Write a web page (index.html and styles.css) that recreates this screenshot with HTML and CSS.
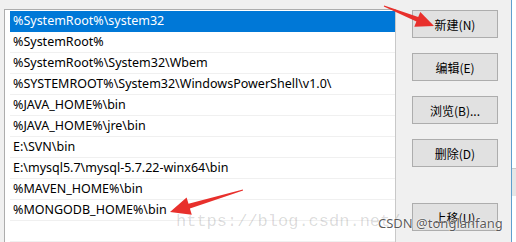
FILE: index.html
```html
<!DOCTYPE html>
<html>
<head>
<meta charset="utf-8">
<link rel="stylesheet" href="styles.css">
</head>
<body>
<div class="screen">
  <div class="dialog">
    <div class="list">
      <div class="row selected">%SystemRoot%\system32</div>
      <div class="row">%SystemRoot%</div>
      <div class="row">%SystemRoot%\System32\Wbem</div>
      <div class="row">%SYSTEMROOT%\System32\WindowsPowerShell\v1.0\</div>
      <div class="row">%JAVA_HOME%\bin</div>
      <div class="row">%JAVA_HOME%\jre\bin</div>
      <div class="row">E:\SVN\bin</div>
      <div class="row">E:\mysql5.7\mysql-5.7.22-winx64\bin</div>
      <div class="row">%MAVEN_HOME%\bin</div>
      <div class="row">%MONGODB_HOME%\bin</div>
      <div class="row"></div>
    </div>
    <div class="buttons">
      <div class="btn">新建(N)</div>
      <div class="btn">编辑(E)</div>
      <div class="btn">浏览(B)...</div>
      <div class="btn">删除(D)</div>
      <div class="btn btn-far">上移(U)</div>
    </div>
  </div>
  <div class="edge"></div>
  <div class="behind"><div class="behind-band"></div></div>

  <div class="watermark">https://blog.csdn.net/</div>
  <div class="credit">CSDN @tonglanfang</div>

  <svg class="arrows" width="516" height="242" viewBox="0 0 516 242">
    <polygon fill="#e8302c" points="384.2,5.5 418.2,17.0 420.3,11.9 434,26 414.3,26.7 416.4,21.6 383.8,6.5"/>
    <polygon fill="#e8302c" points="242.9,189.5 188.5,203.8 186.6,197.6 170,212 191.8,214.8 189.9,208.6 243.1,190.5"/>
  </svg>
</div>
</body>
</html>
```
FILE: styles.css
```css
html, body {
  margin: 0;
  padding: 0;
}
body {
  background: #f0f0f0;
  width: 516px;
  height: 242px;
  overflow: hidden;
}
.screen {
  position: relative;
  display: flex;
  width: 516px;
  height: 242px;
  overflow: hidden;
}
.dialog {
  display: flex;
  align-items: flex-start;
  width: 507px;
  padding-left: 4px;
  background: #f0f0f0;
}
.list {
  box-sizing: border-box;
  width: 392px;
  height: 260px;
  margin-top: 9px;
  padding: 1px 0 0 5px;
  background: #fff;
  border: 1px solid #adadad;
  border-right-color: #c8c8c8;
  font-family: "Noto Sans", "Open Sans", sans-serif;
  font-size: 12.5px;
  color: #000;
}
.row {
  height: 20px;
  line-height: 20px;
  padding-left: 3px;
  border-bottom: 1px solid #f0f0f0;
  white-space: nowrap;
}
.row.selected {
  background: #0078d7;
  color: #fff;
  border-bottom-color: #0078d7;
}
.buttons {
  display: flex;
  flex-direction: column;
  gap: 15px;
  margin-left: 16px;
  padding-top: 10px;
}
.btn {
  box-sizing: border-box;
  width: 86px;
  height: 28px;
  background: #e1e1e1;
  border: 1px solid #adadad;
  font-family: "Noto Sans CJK SC", "Noto Sans", sans-serif;
  font-size: 12px;
  color: #000;
  display: flex;
  align-items: center;
  justify-content: center;
}
.btn-far {
  margin-top: 21px;
}
.edge {
  width: 1px;
  background: #5f9fcf;
}
.behind {
  flex: 1;
  background: #fff;
  padding-top: 168px;
}
.behind-band {
  height: 27px;
  background: #e6e6e6;
  border-top: 1px solid #c9c9c9;
}
.watermark {
  position: absolute;
  left: 176px;
  top: 212px;
  font-family: "Liberation Mono", monospace;
  font-size: 17px;
  color: rgba(0, 0, 0, 0.15);
  white-space: nowrap;
}
.credit {
  position: absolute;
  left: 378px;
  top: 214px;
  font-family: "Noto Sans", sans-serif;
  font-size: 13px;
  color: rgba(60, 60, 60, 0.85);
  text-shadow: 0 0 2px #fff, 0 0 1px #fff;
  white-space: nowrap;
}
.arrows {
  position: absolute;
  left: 0;
  top: 0;
  pointer-events: none;
}
```
